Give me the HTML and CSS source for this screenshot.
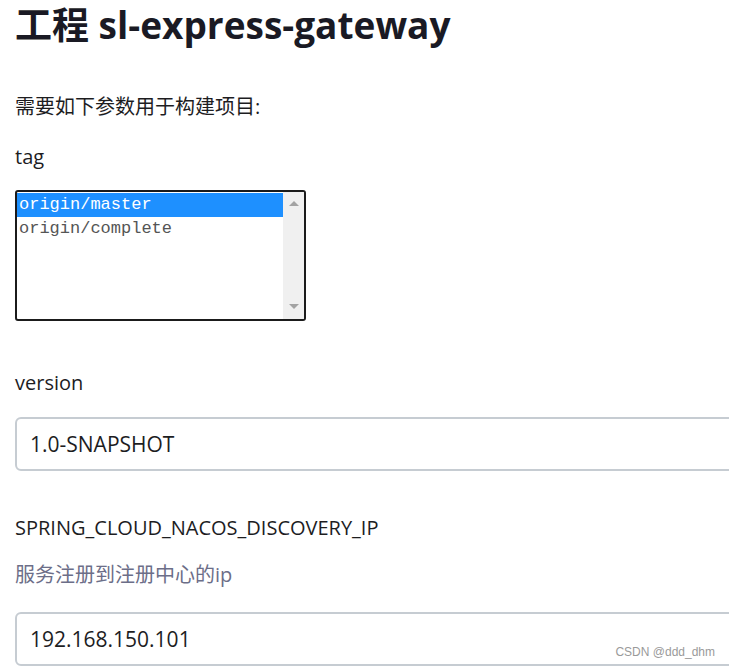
FILE: index.html
```html
<!DOCTYPE html>
<html lang="zh">
<head>
  <meta charset="UTF-8" />
  <meta name="viewport" content="width=device-width, initial-scale=1" />
  <title>工程 sl-express-gateway</title>
  <link rel="stylesheet" href="styles.css">
</head>
<body>

  <h1>工程 sl-express-gateway</h1>

  <p class="intro">需要如下参数用于构建项目:</p>

  <!-- tag -->
  <div class="parametro">
    <div class="nombre">tag</div>
    <div class="lista" role="listbox">
      <div class="opciones">
        <div class="opcion activa">origin/master</div>
        <div class="opcion">origin/complete</div>
      </div>
      <div class="barra">
        <span class="flecha arriba"></span>
        <span class="flecha abajo"></span>
      </div>
    </div>
  </div>

  <!-- version -->
  <div class="parametro version">
    <div class="nombre">version</div>
    <input class="campo" type="text" value="1.0-SNAPSHOT">
  </div>

  <!-- nacos ip -->
  <div class="parametro ip">
    <div class="nombre">SPRING_CLOUD_NACOS_DISCOVERY_IP</div>
    <div class="descripcion">服务注册到注册中心的ip</div>
    <input class="campo" type="text" value="192.168.150.101">
  </div>

  <div class="marca">CSDN @ddd_dhm</div>

</body>
</html>
```

FILE: styles.css
```css
body {
  font-family: 'Open Sans', 'Noto Sans CJK SC', sans-serif;
  margin: 0;
  padding: 0 0 0 15px;
  background-color: #fff;
  color: #1d1d1f;
  overflow: hidden;
}

h1 {
  margin: 0;
  font-size: 37px;
  line-height: 50px;
  font-weight: 700;
  color: #1a1a24;
}

.intro {
  margin: 44px 0 0;
  font-size: 20px;
  line-height: 26px;
}

.parametro {
  margin-top: 24px;
}

.nombre {
  font-size: 20px;
  line-height: 26px;
}

.lista {
  margin-top: 20px;
  width: 287px;
  height: 127px;
  border: 2px solid #1b1b1b;
  border-radius: 3px;
  display: flex;
  overflow: hidden;
}

.opciones {
  flex: 1;
  padding-top: 1px;
  font-family: 'Liberation Mono', monospace;
  font-size: 17px;
}

.opcion {
  line-height: 24px;
  height: 24px;
  padding-left: 2px;
  color: #555;
}

.opcion.activa {
  background-color: #1e90ff;
  color: #fff;
}

.barra {
  width: 21px;
  background-color: #f0f0f0;
  display: flex;
  flex-direction: column;
  justify-content: space-between;
  align-items: center;
  padding: 9px 0 10px;
}

.flecha {
  width: 0;
  height: 0;
  border-left: 5px solid transparent;
  border-right: 5px solid transparent;
}

.flecha.arriba {
  border-bottom: 5px solid #a3a3a3;
}

.flecha.abajo {
  border-top: 5px solid #a3a3a3;
}

.version {
  margin-top: 49px;
}

.ip {
  margin-top: 44px;
}

.descripcion {
  margin-top: 21px;
  font-size: 20px;
  line-height: 26px;
  color: #6c6e88;
}

.campo {
  display: block;
  box-sizing: border-box;
  width: 760px;
  height: 54px;
  margin-top: 21px;
  padding: 0 13px;
  border: 2px solid #c6ccd2;
  border-radius: 6px;
  font-family: 'Open Sans', sans-serif;
  font-size: 21px;
  color: #1d1d1f;
  outline: none;
}

.ip .campo {
  margin-top: 24px;
}

.marca {
  position: absolute;
  right: 14px;
  top: 645px;
  font-family: 'Liberation Sans', sans-serif;
  font-size: 12px;
  color: #9a9a9a;
}
```
